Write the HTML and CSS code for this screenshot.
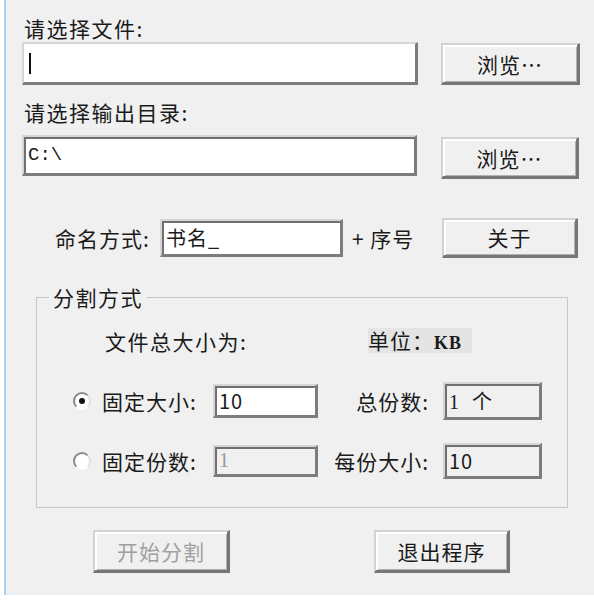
FILE: index.html
```html
<!DOCTYPE html>
<html lang="zh-CN">
<head>
    <meta charset="UTF-8">
    <meta name="viewport" content="width=device-width, initial-scale=1.0">
    <title>文件分割</title>
    <link rel="stylesheet" href="styles.css">
</head>
<body>
<main class="win">
    <div class="lbl">请选择文件:</div>
    <div class="row row_file">
        <div class="field field_file field_focus"><span class="caret"></span></div>
        <button class="btn btn_browse" type="button">浏览…</button>
    </div>

    <div class="lbl lbl_dir">请选择输出目录:</div>
    <div class="row row_dir">
        <div class="field field_dir mono">C:\</div>
        <button class="btn btn_browse2" type="button">浏览…</button>
    </div>

    <div class="row row_name">
        <span class="name_lbl">命名方式:</span>
        <div class="field field_name">书名_</div>
        <span class="suffix">+ 序号</span>
        <button class="btn btn_about" type="button">关于</button>
    </div>

    <fieldset class="group">
        <legend>分割方式</legend>
        <div class="info_row">
            <span class="total_lbl">文件总大小为:</span>
            <span class="unit">单位：<b class="serif">KB</b></span>
        </div>
        <div class="grid_row row_a">
            <span class="radio"><span class="dot"></span></span>
            <span>固定大小:</span>
            <div class="field field_size">10</div>
            <span class="rlbl">总份数:</span>
            <div class="field field_ro field_count serif">1&nbsp;&nbsp;个</div>
        </div>
        <div class="grid_row row_b">
            <span class="radio"></span>
            <span>固定份数:</span>
            <div class="field field_ro field_dis serif">1</div>
            <span class="rlbl">每份大小:</span>
            <div class="field field_ro field_each">10</div>
        </div>
    </fieldset>

    <div class="row row_actions">
        <button class="btn btn_start" type="button" disabled>开始分割</button>
        <button class="btn btn_exit" type="button">退出程序</button>
    </div>
</main>
</body>
</html>
```

FILE: styles.css
```css
*{
    font-family: "Noto Sans CJK SC", "Noto Sans", sans-serif;
}
body{
    margin: 0;
    background-color: #ffffff;
}
.win{
    box-sizing: border-box;
    height: 595px;
    margin-left: 4px;
    border-left: 2px solid #a9d1f2;
    background-color: #f0f0f0;
    padding: 16px 0 0 16px;
    color: #1a1a1a;
    font-size: 21px;
    white-space: nowrap;
}
.lbl{
    margin-left: 2px;
    line-height: 24px;
    letter-spacing: 1.5px;
}
.lbl_dir{
    margin-top: 15px;
}
.row{
    display: flex;
    align-items: flex-start;
}
.row_file{
    margin-top: 2px;
}
.row_dir{
    margin-top: 11px;
}

/* edit boxes */
.field{
    box-sizing: border-box;
    background-color: #ffffff;
    border-style: solid;
    border-width: 2px 3px 3px 2px;
    border-color: #d6d6d6 #7c7c7c #7c7c7c #d6d6d6;
    box-shadow: inset 2px 2px 0 #707070;
    padding-left: 4px;
    font-size: 20px;
    display: flex;
    align-items: center;
}
.field_focus{
    box-shadow: none;
}
.field_file{
    width: 396px;
    height: 43px;
}
.caret{
    width: 2px;
    height: 21px;
    background-color: #111;
    margin-left: 1px;
}
.field_dir{
    width: 395px;
    height: 41px;
}
.mono{
    font-family: "Liberation Mono", monospace;
    font-size: 19px;
}
.field_name{
    width: 183px;
    height: 38px;
    letter-spacing: 1px;
}
.field_ro{
    background-color: #f0f0f0;
}
.field_size{
    height: 34px;
}
.field_count{
    height: 38px;
}
.field_dis{
    height: 32px;
    color: #9a9a9a;
}
.field_each{
    height: 36px;
}
.serif{
    font-family: "Liberation Serif", serif;
}

/* buttons */
.btn{
    box-sizing: border-box;
    background-color: #f0f0f0;
    border-style: solid;
    border-width: 2px 3px 3px 2px;
    border-color: #d2d2d2 #767676 #767676 #d2d2d2;
    box-shadow: inset 2px 2px 0 #ffffff, inset -1px -1px 0 #b0b0b0;
    font-size: 21px;
    color: #1a1a1a;
    padding: 0;
    letter-spacing: 1px;
}
.btn_browse{
    width: 139px;
    height: 42px;
    margin: 1px 0 0 23px;
}
.btn_browse2{
    width: 138px;
    height: 42px;
    margin: 2px 0 0 24px;
}
.row_name{
    margin-top: 38px;
    align-items: center;
    height: 41px;
}
.name_lbl{
    width: 105px;
    margin-left: 33px;
    letter-spacing: 1px;
}
.suffix{
    width: 90px;
    margin-left: 9px;
    letter-spacing: 1px;
}
.btn_about{
    width: 136px;
    height: 40px;
}

/* group box */
.group{
    box-sizing: border-box;
    width: 532px;
    height: 223px;
    margin: 27px 0 0 14px;
    padding: 0;
    border: 1px solid #c6c6c6;
}
.group legend{
    margin-left: 12px;
    padding: 0 4px;
    line-height: 24px;
    letter-spacing: 1.5px;
}
.info_row{
    display: flex;
    align-items: center;
    margin-top: 19px;
    padding-left: 68px;
    height: 25px;
}
.total_lbl{
    width: 263px;
    letter-spacing: 1.5px;
}
.unit{
    width: 104px;
    height: 25px;
    line-height: 25px;
    background-color: #e4e4e4;
    letter-spacing: 1px;
}
.unit b{
    font-size: 18px;
}
.grid_row{
    display: grid;
    grid-template-columns: 29px 111px 105px 125px 99px;
    align-items: center;
    padding-left: 36px;
    height: 38px;
    letter-spacing: 1px;
}
.row_a{
    margin-top: 29px;
}
.row_b{
    margin-top: 22px;
}
.rlbl{
    text-align: right;
    padding-right: 14px;
}
.radio{
    box-sizing: border-box;
    width: 18px;
    height: 18px;
    border-radius: 50%;
    border: 2px solid;
    border-color: #8a8a8a #e2e2e2 #ffffff #8a8a8a;
    background-color: #ffffff;
    display: flex;
    justify-content: center;
    align-items: center;
}
.dot{
    width: 6px;
    height: 6px;
    border-radius: 50%;
    background-color: #111;
}

/* bottom buttons */
.row_actions{
    margin-top: 22px;
}
.btn_start{
    width: 137px;
    height: 43px;
    margin-left: 71px;
    color: #a0a0a0;
}
.btn_exit{
    width: 136px;
    height: 43px;
    margin-left: 144px;
}
```
